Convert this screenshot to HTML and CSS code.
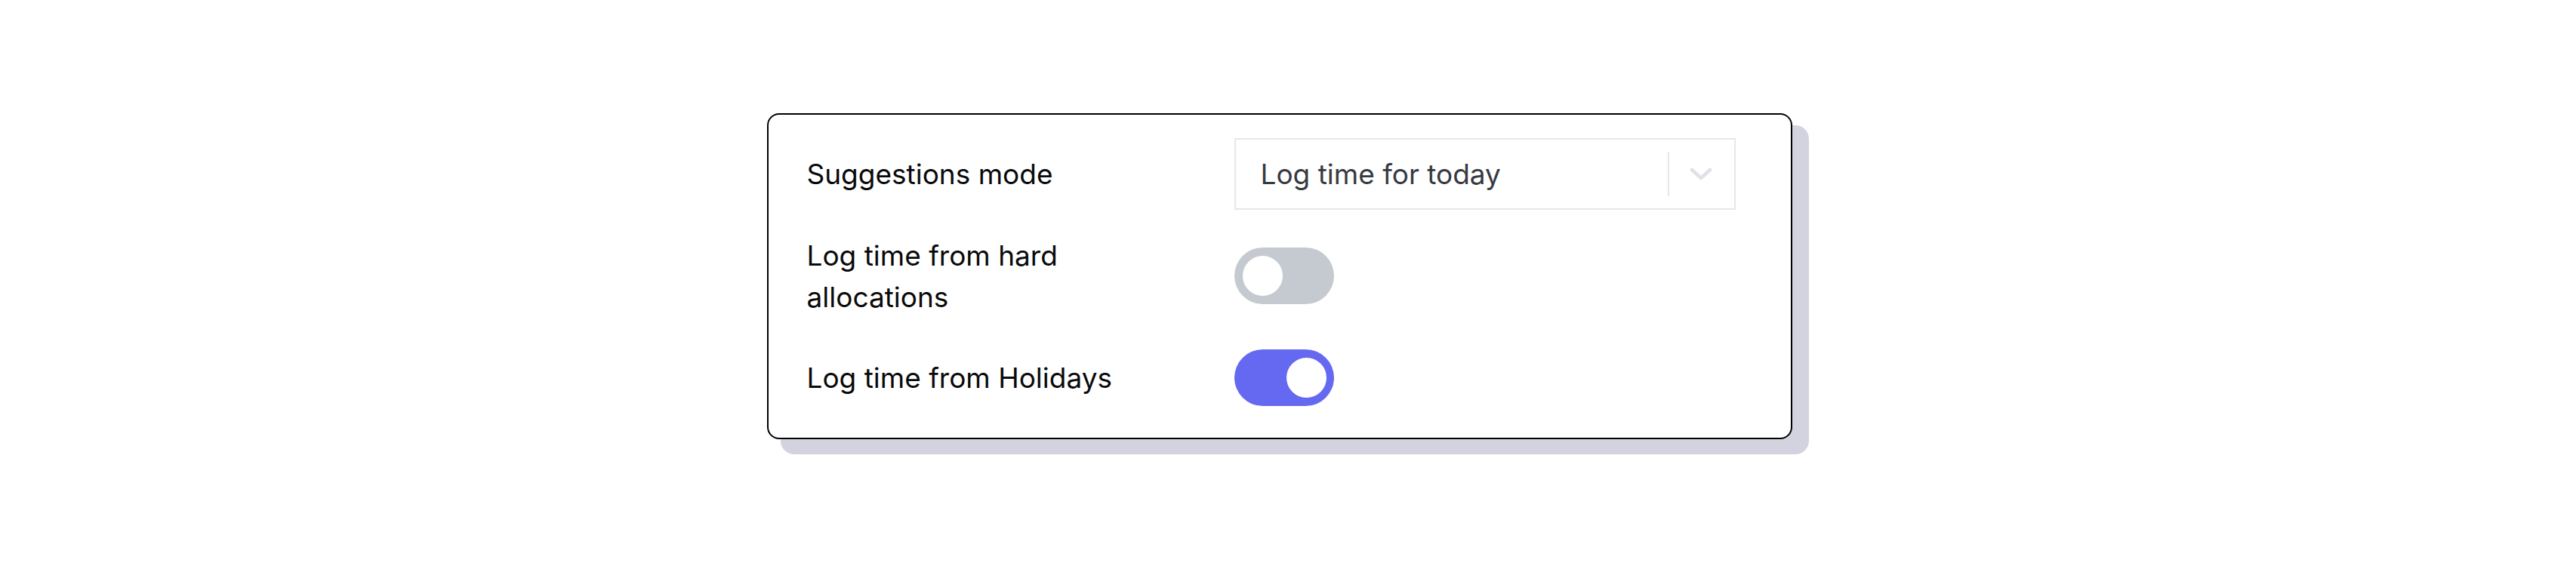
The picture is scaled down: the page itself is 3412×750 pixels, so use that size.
FILE: index.html
```html
<!DOCTYPE html>
<html lang="en">
<head>
<meta charset="utf-8">
<title>Time logging settings</title>
<link rel="stylesheet" href="styles.css">
</head>
<body>
  <main class="stage">
    <section class="settings-card">
      <div class="setting-row">
        <span class="setting-label">Suggestions mode</span>
        <div class="select">
          <span class="select-value">Log time for today</span>
          <span class="select-indicators">
            <span class="select-separator"></span>
            <span class="select-chevron">
              <svg viewBox="0 0 30 17" width="30" height="17" aria-hidden="true">
                <path d="M3 3 L15 14 L27 3" fill="none" stroke="currentColor" stroke-width="4.5" stroke-linecap="round" stroke-linejoin="round"/>
              </svg>
            </span>
          </span>
        </div>
      </div>
      <div class="setting-row">
        <span class="setting-label">Log time from hard allocations</span>
        <span class="toggle"><span class="toggle-knob"></span></span>
      </div>
      <div class="setting-row">
        <span class="setting-label">Log time from Holidays</span>
        <span class="toggle toggle-on"><span class="toggle-knob"></span></span>
      </div>
    </section>
  </main>
</body>
</html>
```

FILE: styles.css
```css
html, body {
  margin: 0;
  padding: 0;
  background: #ffffff;
}

body {
  font-family: "Inter", "Noto Sans", "Liberation Sans", sans-serif;
  color: #0a0a0a;
}

.stage {
  min-height: 750px;
  display: flex;
  align-items: center;
  justify-content: center;
}

/* card with a flat offset shadow block */
.settings-card {
  box-sizing: border-box;
  width: 1358px;
  margin-right: 23px;
  margin-bottom: 19px;
  padding: 24px 73px 24px 51px;
  border: 2px solid #000000;
  border-radius: 16px;
  background: #ffffff;
  box-shadow: 20px 18px 0 2px #d3d3df;
  display: flex;
  flex-direction: column;
  gap: 25px;
}

.setting-row {
  min-height: 110px;
  display: grid;
  grid-template-columns: 460px 664px;
  column-gap: 106px;
  align-items: center;
}

.setting-label {
  font-size: 37px;
  line-height: 55px;
  color: #0a0a0a;
}

/* select */
.select {
  box-sizing: border-box;
  height: 95px;
  border: 2px solid #e6e7ec;
  background: #ffffff;
  display: flex;
  align-items: center;
  padding-left: 33px;
}

.select-value {
  flex: 1;
  font-size: 37px;
  line-height: 44px;
  color: #363a41;
}

.select-indicators {
  display: flex;
  align-items: center;
  height: 100%;
}

.select-separator {
  width: 2px;
  height: 59px;
  background: #e6e7ec;
}

.select-chevron {
  display: flex;
  align-items: center;
  padding: 0 29px 0 27px;
  color: #e0e1e6;
}

.select-chevron svg {
  display: block;
}

/* toggle switch */
.toggle {
  box-sizing: border-box;
  width: 132px;
  height: 75px;
  border-radius: 38px;
  background: #c4cad0;
  padding: 11px;
  display: flex;
  align-items: center;
  justify-content: flex-start;
}

.toggle-on {
  background: #6568f1;
  justify-content: flex-end;
  padding-right: 10px;
}

.toggle-knob {
  width: 53px;
  height: 53px;
  border-radius: 50%;
  background: #ffffff;
}
```
